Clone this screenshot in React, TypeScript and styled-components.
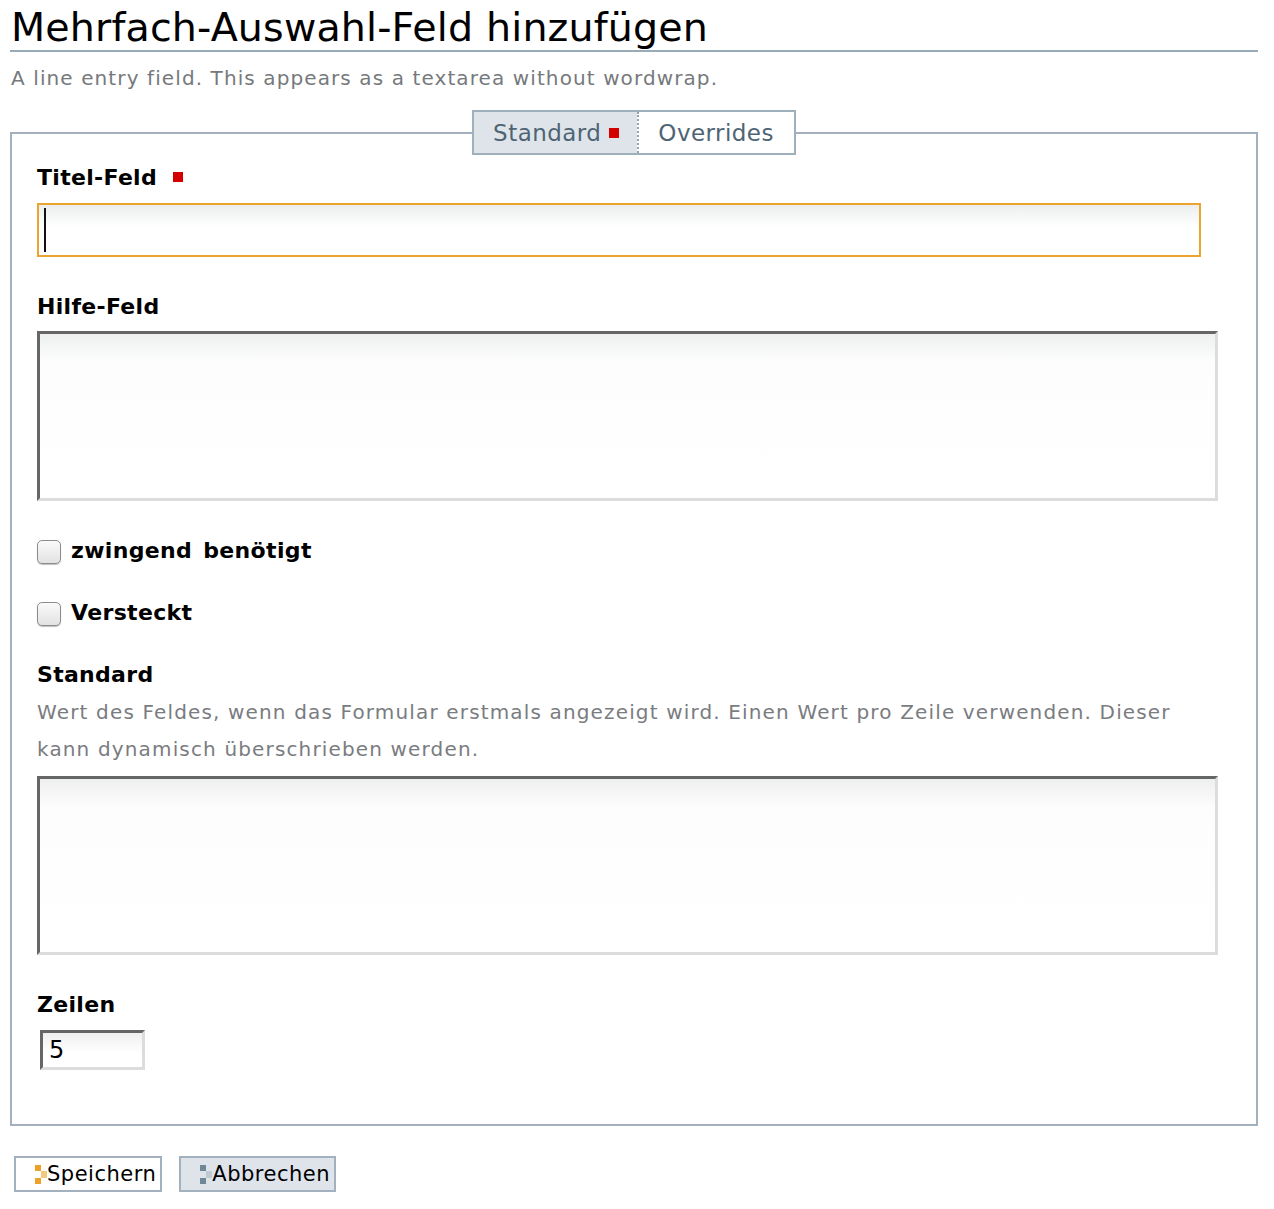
import React from "react";
import styled, { createGlobalStyle } from "styled-components";

const GlobalStyle = createGlobalStyle`
  html, body {
    margin: 0;
    padding: 0;
    background: #fff;
  }
  body {
    font-family: "DejaVu Sans", Verdana, sans-serif;
    color: #000;
  }
`;

const Page = styled.div`
  width: 1248px;
  padding: 0 0 0 10px;
`;

const Title = styled.h1`
  margin: 0;
  padding: 6px 0 2px 1px;
  font-size: 39.6px;
  font-weight: normal;
  line-height: 42px;
  letter-spacing: 0.15px;
  border-bottom: 2px solid #9aabb8;
`;

const Lead = styled.p`
  margin: 11px 0 0 1px;
  font-size: 20px;
  line-height: 30px;
  letter-spacing: 1.1px;
  color: #76797c;
`;

const Form = styled.form`
  margin: 0;
`;

const Box = styled.fieldset`
  margin: 17px 0 0;
  padding: 7px 25px 54px;
  border: 2px solid #a2b1bd;
  min-width: 0;
`;

const Tabs = styled.legend`
  margin: 0 auto;
  padding: 0;
  display: flex;
  border: 2px solid #9fb0bd;
`;

const Tab = styled.span<{ $active?: boolean }>`
  display: flex;
  align-items: center;
  gap: 8px;
  height: 41px;
  padding: 0 ${(p) => (p.$active ? 18 : 20)}px 0 19px;
  font-size: 23px;
  letter-spacing: 0.45px;
  color: #4e6474;
  background: ${(p) => (p.$active ? "#dfe4eb" : "#fff")};
  & + & {
    border-left: 2px dotted #93a5b3;
  }
`;

const Required = styled.span`
  display: inline-block;
  width: 10px;
  height: 10px;
  background: #d40000;
`;

const Field = styled.div<{ $top?: number }>`
  margin-top: ${(p) => p.$top ?? 0}px;
`;

const Label = styled.label`
  display: flex;
  align-items: center;
  gap: 16px;
  height: 30px;
  font-size: 22px;
  font-weight: bold;
  letter-spacing: 0.3px;
`;

const Help = styled.div`
  margin-top: 5px;
  font-size: 20px;
  line-height: 37px;
  letter-spacing: 1.15px;
  color: #7a7c7f;
  width: 1160px;
`;

const CaretWrap = styled.div`
  position: relative;
  margin-top: 11px;
  width: 1164px;
  &::after {
    content: "";
    position: absolute;
    left: 7px;
    top: 5px;
    width: 2px;
    height: 44px;
    background: #111;
  }
`;

const TextInput = styled.input`
  display: block;
  box-sizing: border-box;
  width: 100%;
  height: 54px;
  margin: 0;
  border: 2px solid #eba42d;
  outline: none;
  background: linear-gradient(#eceeee, #fff 22px);
  font: 20px "DejaVu Sans", sans-serif;
  padding: 0 8px;
`;

const Area = styled.textarea<{ $h: number; $gap?: number }>`
  display: block;
  box-sizing: border-box;
  width: 1181px;
  height: ${(p) => p.$h}px;
  margin: ${(p) => p.$gap ?? 10}px 0 0;
  border-style: solid;
  border-width: 3px;
  border-color: #666 #dcdcdc #dcdcdc #666;
  background: linear-gradient(#eeefef, #fdfdfd 28px, #fff);
  resize: none;
  outline: none;
  font: 20px "DejaVu Sans", sans-serif;
`;

const CheckRow = styled.label`
  display: flex;
  align-items: center;
  gap: 10px;
  height: 30px;
  font-size: 22px;
  font-weight: bold;
  letter-spacing: 0.35px;
  word-spacing: 3px;
`;

const Check = styled.span`
  box-sizing: border-box;
  width: 24px;
  height: 24px;
  margin-top: 4px;
  border: 1px solid #8c8c8c;
  border-radius: 5px;
  background: linear-gradient(#fafafa, #e2e2e2);
  box-shadow: 0 1px 1px rgba(0, 0, 0, 0.25);
`;

const SmallInput = styled.input`
  display: block;
  box-sizing: border-box;
  width: 105px;
  height: 40px;
  margin: 11px 0 0 3px;
  padding: 0 6px;
  border-style: solid;
  border-width: 3px;
  border-color: #666 #dcdcdc #dcdcdc #666;
  background: linear-gradient(#efefef, #fff 20px);
  outline: none;
  font: 24px "DejaVu Sans", sans-serif;
  color: #000;
`;

const Actions = styled.div`
  display: flex;
  gap: 17px;
  margin: 30px 0 0 4px;
`;

const Button = styled.button<{ $alt?: boolean }>`
  display: flex;
  align-items: center;
  height: 36px;
  padding: 0 4px 0 19px;
  border: 2px solid #a2b1bd;
  background: ${(p) => (p.$alt ? "#dfe4eb" : "#fff")};
  font: 21px "DejaVu Sans", sans-serif;
  letter-spacing: 0.5px;
  color: #000;
  cursor: pointer;
`;

const ArrowIcon = ({ dark, light }: { dark: string; light: string }) => (
  <svg width="12" height="19" viewBox="0 0 12 19" aria-hidden>
    <rect x="0" y="0" width="6" height="6" fill={dark} />
    <rect x="6" y="6" width="6" height="7" fill={light} />
    <rect x="0" y="13" width="6" height="6" fill={dark} />
  </svg>
);

export default function App() {
  return (
    <Page>
      <GlobalStyle />
      <Title>Mehrfach-Auswahl-Feld hinzufügen</Title>
      <Lead>A line entry field. This appears as a textarea without wordwrap.</Lead>
      <Form onSubmit={(e) => e.preventDefault()}>
        <Box>
          <Tabs>
            <Tab $active>
              Standard <Required />
            </Tab>
            <Tab>Overrides</Tab>
          </Tabs>

          <Field>
            <Label>
              Titel-Feld <Required />
            </Label>
            <CaretWrap>
              <TextInput type="text" />
            </CaretWrap>
          </Field>

          <Field $top={34}>
            <Label>Hilfe-Feld</Label>
            <Area $h={170} />
          </Field>

          <Field $top={34}>
            <CheckRow>
              <Check />
              zwingend benötigt
            </CheckRow>
          </Field>

          <Field $top={32}>
            <CheckRow>
              <Check />
              Versteckt
            </CheckRow>
          </Field>

          <Field $top={32}>
            <Label>Standard</Label>
            <Help>
              Wert des Feldes, wenn das Formular erstmals angezeigt wird. Einen Wert pro Zeile
              verwenden. Dieser kann dynamisch überschrieben werden.
            </Help>
            <Area $h={179} $gap={8} />
          </Field>

          <Field $top={34}>
            <Label>Zeilen</Label>
            <SmallInput type="text" defaultValue="5" />
          </Field>
        </Box>

        <Actions>
          <Button type="submit">
            <ArrowIcon dark="#eda12a" light="#f4c97d" />
            Speichern
          </Button>
          <Button type="button" $alt>
            <ArrowIcon dark="#6f8797" light="#bfcad3" />
            Abbrechen
          </Button>
        </Actions>
      </Form>
    </Page>
  );
}
